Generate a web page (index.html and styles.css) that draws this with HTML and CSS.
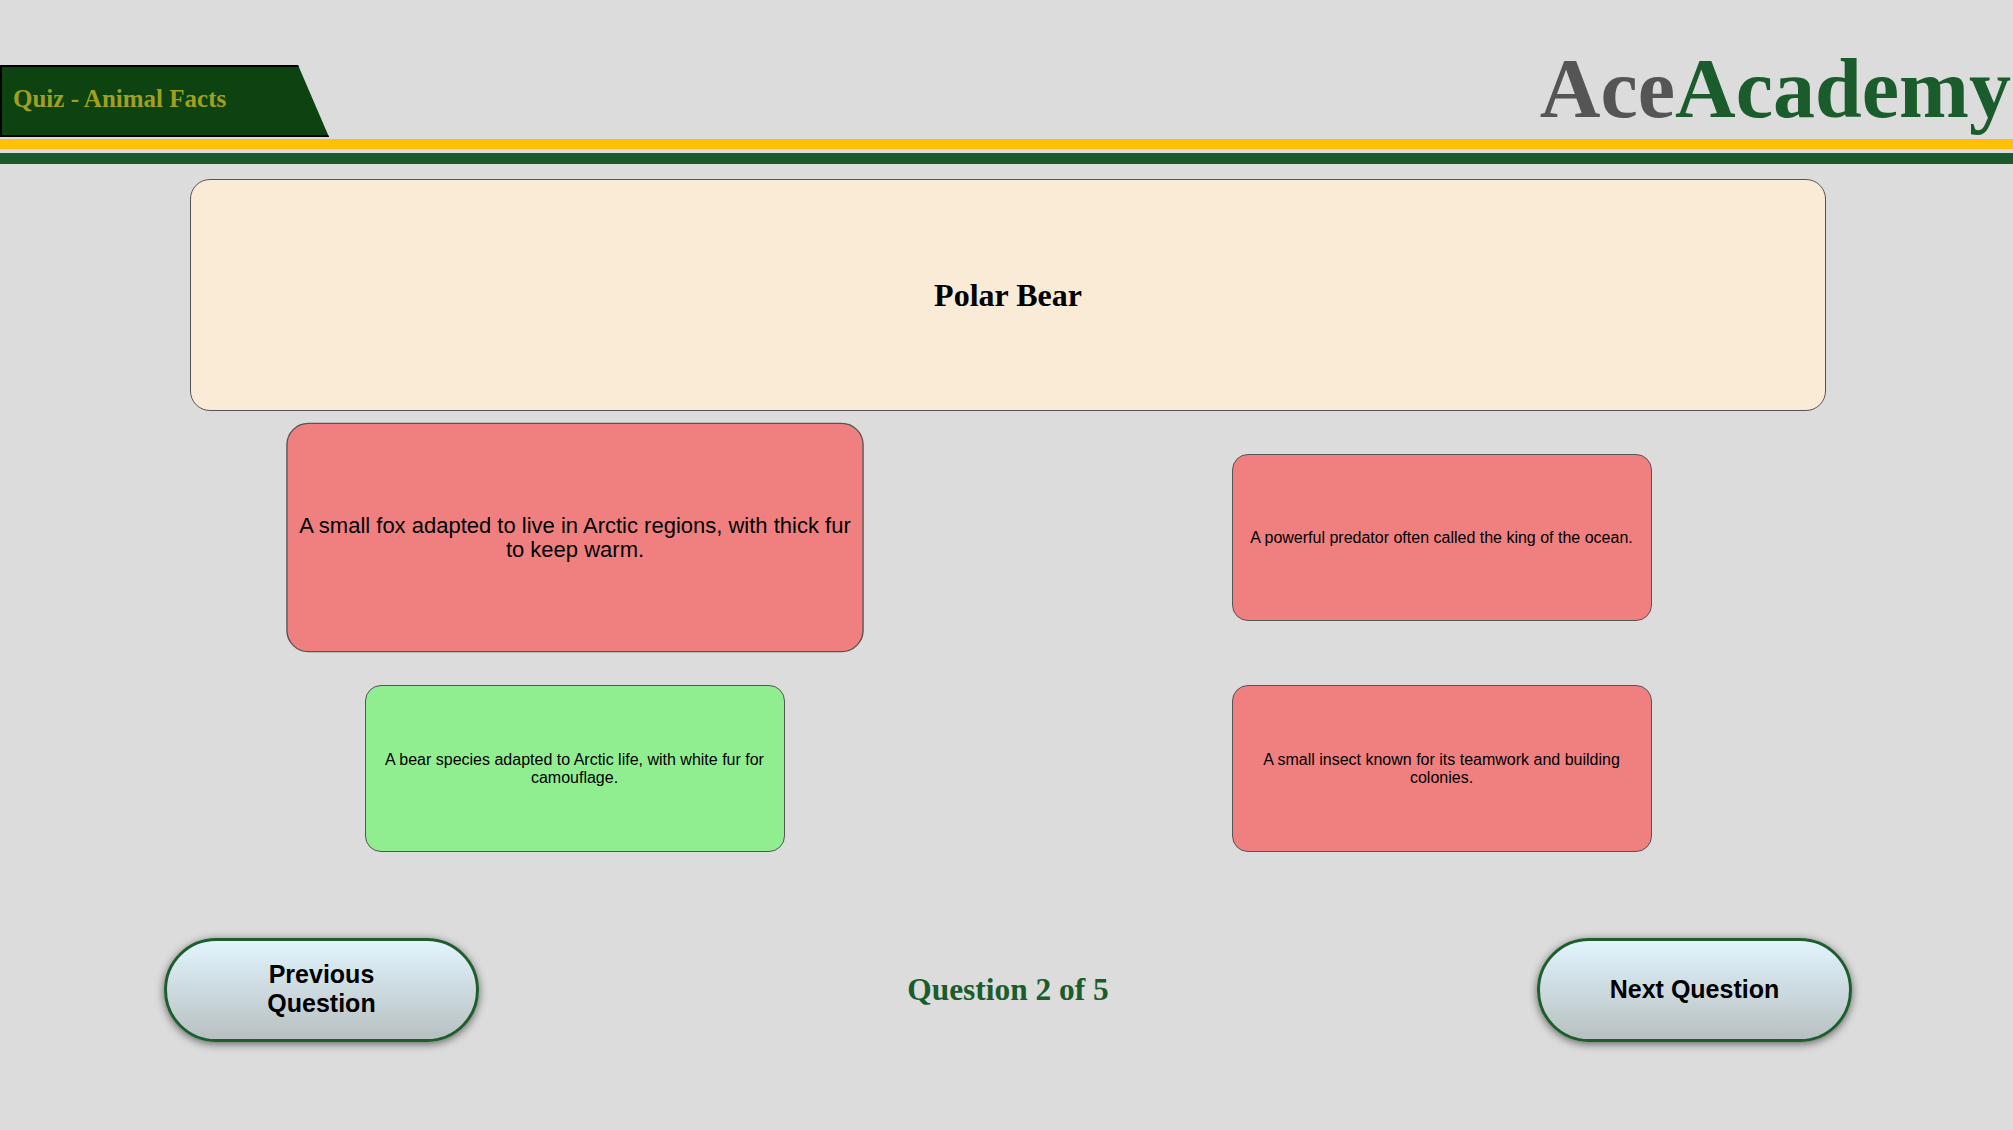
FILE: index.html
```html
<!DOCTYPE html>
<html lang="en">
<head>
<meta charset="utf-8">
<title>AceAcademy Quiz - Animal Facts</title>
<link rel="stylesheet" href="styles.css">
</head>
<body>
<header class="topbar">
  <div class="quiz-tab"><span class="quiz-title">Quiz - Animal Facts</span></div>
  <div class="logo"><span class="logo-ace">Ace</span><span class="logo-academy">Academy</span></div>
</header>
<div class="stripe stripe-yellow"></div>
<div class="stripe stripe-green"></div>
<main class="quiz">
  <section class="question-card">
    <h1 class="question-title">Polar Bear</h1>
  </section>
  <section class="options">
    <div class="option wrong enlarged">A small fox adapted to live in Arctic regions, with thick fur to keep warm.</div>
    <div class="option wrong">A powerful predator often called the king of the ocean.</div>
    <div class="option correct">A bear species adapted to Arctic life, with white fur for camouflage.</div>
    <div class="option wrong">A small insect known for its teamwork and building colonies.</div>
  </section>
  <nav class="quiz-nav">
    <button class="nav-btn">Previous Question</button>
    <div class="counter">Question 2 of 5</div>
    <button class="nav-btn">Next Question</button>
  </nav>
</main>
</body>
</html>
```
FILE: styles.css
```css
html, body {
  margin: 0;
  padding: 0;
}
body {
  background: #dcdcdc;
  font-family: "Liberation Serif", "Times New Roman", serif;
  width: 2013px;
  min-height: 1130px;
}
.topbar {
  display: flex;
  justify-content: space-between;
  align-items: flex-start;
  height: 137px;
  padding-right: 2px;
}
.quiz-tab {
  margin-top: 65px;
  box-sizing: border-box;
  width: 329px;
  height: 72px;
  background: #0d4211;
  border: 2px solid #000;
  border-right: none;
  clip-path: polygon(0 0, 298px 0, 329px 100%, 0 100%);
  display: flex;
  align-items: center;
  padding: 0 0 4px 11px;
}
.quiz-title {
  font-family: "Liberation Serif", "Times New Roman", serif;
  font-weight: bold;
  font-size: 25px;
  color: #a0a020;
}
.logo {
  margin-top: 47px;
  font-family: "Liberation Serif", "Times New Roman", serif;
  font-weight: bold;
  font-size: 84px;
  line-height: 84px;
}
.logo-ace { color: #555555; }
.logo-academy { color: #1a5c2b; }
.stripe { width: 100%; }
.stripe-yellow {
  margin-top: 2px;
  height: 10px;
  background: #ffc107;
}
.stripe-green {
  margin-top: 4px;
  height: 11px;
  background: #185a2b;
}
.question-card {
  box-sizing: border-box;
  width: 1636px;
  height: 232px;
  margin: 15px 0 0 190px;
  background: #faebd7;
  border: 1px solid #555;
  border-radius: 20px;
  display: flex;
  align-items: center;
  justify-content: center;
}
.question-title {
  margin: 0;
  font-family: "Liberation Serif", "Times New Roman", serif;
  font-weight: bold;
  font-size: 32px;
  color: #000;
}
.options {
  margin-top: 43px;
  padding-left: 3px;
  display: grid;
  grid-template-columns: repeat(2, 420px);
  grid-auto-rows: 167px;
  column-gap: 447px;
  row-gap: 64px;
  justify-content: center;
}
.option {
  box-sizing: border-box;
  border: 1px solid #555;
  border-radius: 16px;
  padding: 0 6px;
  display: flex;
  align-items: center;
  justify-content: center;
  text-align: center;
  font-family: "Liberation Sans", Arial, sans-serif;
  font-size: 16px;
  color: #000;
}
.option.wrong { background: #f08080; }
.option.correct { background: #90ee90; }
.option.enlarged { transform: scale(1.375); }
.quiz-nav {
  margin-top: 86px;
  display: flex;
  justify-content: space-between;
  align-items: center;
  padding: 0 161px 0 164px;
}
.nav-btn {
  box-sizing: border-box;
  width: 315px;
  height: 104px;
  padding: 0 50px 2px;
  border: 3px solid #1d5e2c;
  border-radius: 52px;
  background: linear-gradient(to bottom, #e1f4fd, #b8c0c1);
  box-shadow: 0 2px 8px rgba(0, 0, 0, 0.55);
  font-family: "Liberation Sans", Arial, sans-serif;
  font-weight: bold;
  font-size: 25px;
  color: #000;
  cursor: pointer;
}
.counter {
  font-family: "Liberation Serif", "Times New Roman", serif;
  font-weight: bold;
  font-size: 31.4px;
  color: #1a5c2b;
}
```
